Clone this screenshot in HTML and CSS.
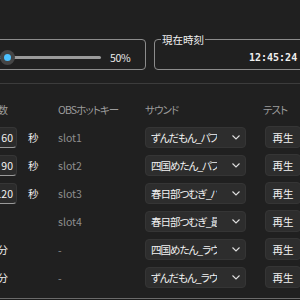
FILE: index.html
```html
<!DOCTYPE html>
<html lang="ja">
<head>
<meta charset="utf-8">
<title>タイマー設定</title>
<link rel="stylesheet" href="styles.css">
</head>
<body>
<div class="page">
    <div class="top">
        <fieldset class="box volume">
            <div class="slider"><span class="thumb"></span></div>
            <span class="pct">50%</span>
        </fieldset>
        <fieldset class="box clock">
            <legend>現在時刻</legend>
            <div class="time">12:45:24</div>
        </fieldset>
    </div>
    <div class="sep"></div>
    <div class="table">
        <div class="head h-num">秒数</div>
        <div class="head"></div>
        <div class="head kana">OBSホットキー</div>
        <div class="head kana">サウンド</div>
        <div class="head kana h-test">テスト</div>

        <div class="num">60</div>
        <div class="unit">秒</div>
        <div class="slot">slot1</div>
        <div class="combo"><span class="val">ずんだもん_パフォーマンス</span><svg width="8" height="5" viewBox="0 0 8 5"><path d="M0.5 0.5 L4 4 L7.5 0.5" fill="none" stroke="#e0e0e0" stroke-width="1.1"/></svg></div>
        <div><button class="play">再生</button></div>

        <div class="num">90</div>
        <div class="unit">秒</div>
        <div class="slot">slot2</div>
        <div class="combo"><span class="val">四国めたん_パフォーマンス</span><svg width="8" height="5" viewBox="0 0 8 5"><path d="M0.5 0.5 L4 4 L7.5 0.5" fill="none" stroke="#e0e0e0" stroke-width="1.1"/></svg></div>
        <div><button class="play">再生</button></div>

        <div class="num">120</div>
        <div class="unit">秒</div>
        <div class="slot">slot3</div>
        <div class="combo"><span class="val">春日部つむぎ_パフォーマンス</span><svg width="8" height="5" viewBox="0 0 8 5"><path d="M0.5 0.5 L4 4 L7.5 0.5" fill="none" stroke="#e0e0e0" stroke-width="1.1"/></svg></div>
        <div><button class="play">再生</button></div>

        <div></div>
        <div></div>
        <div class="slot">slot4</div>
        <div class="combo"><span class="val">春日部つむぎ_最終ラウンド</span><svg width="8" height="5" viewBox="0 0 8 5"><path d="M0.5 0.5 L4 4 L7.5 0.5" fill="none" stroke="#e0e0e0" stroke-width="1.1"/></svg></div>
        <div><button class="play">再生</button></div>

        <div class="word">5分</div>
        <div></div>
        <div class="slot">-</div>
        <div class="combo"><span class="val">四国めたん_ラウンド</span><svg width="8" height="5" viewBox="0 0 8 5"><path d="M0.5 0.5 L4 4 L7.5 0.5" fill="none" stroke="#e0e0e0" stroke-width="1.1"/></svg></div>
        <div><button class="play">再生</button></div>

        <div class="word">1分</div>
        <div></div>
        <div class="slot">-</div>
        <div class="combo"><span class="val">ずんだもん_ラウンド</span><svg width="8" height="5" viewBox="0 0 8 5"><path d="M0.5 0.5 L4 4 L7.5 0.5" fill="none" stroke="#e0e0e0" stroke-width="1.1"/></svg></div>
        <div><button class="play">再生</button></div>
    </div>
    <div class="footer"></div>
</div>
</body>
</html>
```

FILE: styles.css
```css
html, body {margin:0; padding:0; overflow:hidden; background:#202020;}
body {font-family:"Noto Sans CJK JP", "Liberation Sans", sans-serif; font-size:10.5px; color:#e8e8e8; font-feature-settings:"palt";}
.page {width:300px; height:300px;}

.top {display:flex; align-items:flex-start; gap:8px; margin-left:-60px; height:83px;}
.box {flex:none; margin:0; border:1px solid #8c8c8c; border-radius:4px; box-sizing:border-box; min-width:0;}
.volume {width:206px; height:31px; margin-top:39px; padding:6px 0 0 4px; display:flex; align-items:center;}
.slider {position:relative; width:156px; height:3px; border-radius:2px; background:linear-gradient(to right, #4cc2ff 62px, #9b9b9b 62px);}
.thumb {position:absolute; left:55px; top:-6px; width:15px; height:15px; border-radius:50%; background:#454545;}
.thumb::after {content:""; position:absolute; left:4px; top:4px; width:7px; height:7px; border-radius:50%; background:#4cc2ff;}
.pct {margin-left:9px; line-height:12px; color:#ececec; letter-spacing:-0.3px;}

.clock {width:170px; height:37px; margin-top:33px; padding:0 0 0 6px;}
.clock legend {padding:0 1px; line-height:13px; font-size:10.5px; color:#f0f0f0;}
.time {margin:6px 0 0 88px; font-family:"DejaVu Sans Mono", monospace; font-weight:bold; font-size:10px; line-height:12px; color:#f0f0f0;}

.sep {height:1px; background:#3c3c3c;}

.table {display:grid; grid-template-columns:47px 41px 87px 120px 50px; grid-template-rows:39px; grid-auto-rows:28px; align-items:center; margin-left:-30px;}
.head {color:#9c9c9c; padding-top:12px; white-space:nowrap;}
.kana {letter-spacing:-0.9px;}
.h-num {justify-self:end; margin-right:9px;}
.h-test {margin-left:-2px;}
.num {height:21px; box-sizing:border-box; background:#2b2b2b; border:1px solid #363636; border-bottom-color:#9a9a9a; border-radius:4px; text-align:right; padding-right:3px; line-height:19px; color:#f2f2f2;}
.unit {padding-left:11px; color:#ececec;}
.word {justify-self:end; margin-right:9px; color:#ececec;}
.slot {color:#8e8e8e;}
.combo {display:flex; align-items:center; width:101px; height:21px; box-sizing:border-box; background:#2d2d2d; border:1px solid #353535; border-radius:4px; padding-left:5px;}
.combo .val {flex:none; width:66px; overflow:hidden; white-space:nowrap; color:#f2f2f2; letter-spacing:-1px;}
.combo svg {flex:none; margin-left:15px;}
.play {width:36px; height:22px; padding:0; background:#2d2d2d; border:1px solid #353535; border-radius:4px; font-family:inherit; font-size:10.5px; color:#f2f2f2;}

.footer {margin-top:7px; height:6px; border-top:1px solid #6a6a6a; background:#1c1c1c;}
```
